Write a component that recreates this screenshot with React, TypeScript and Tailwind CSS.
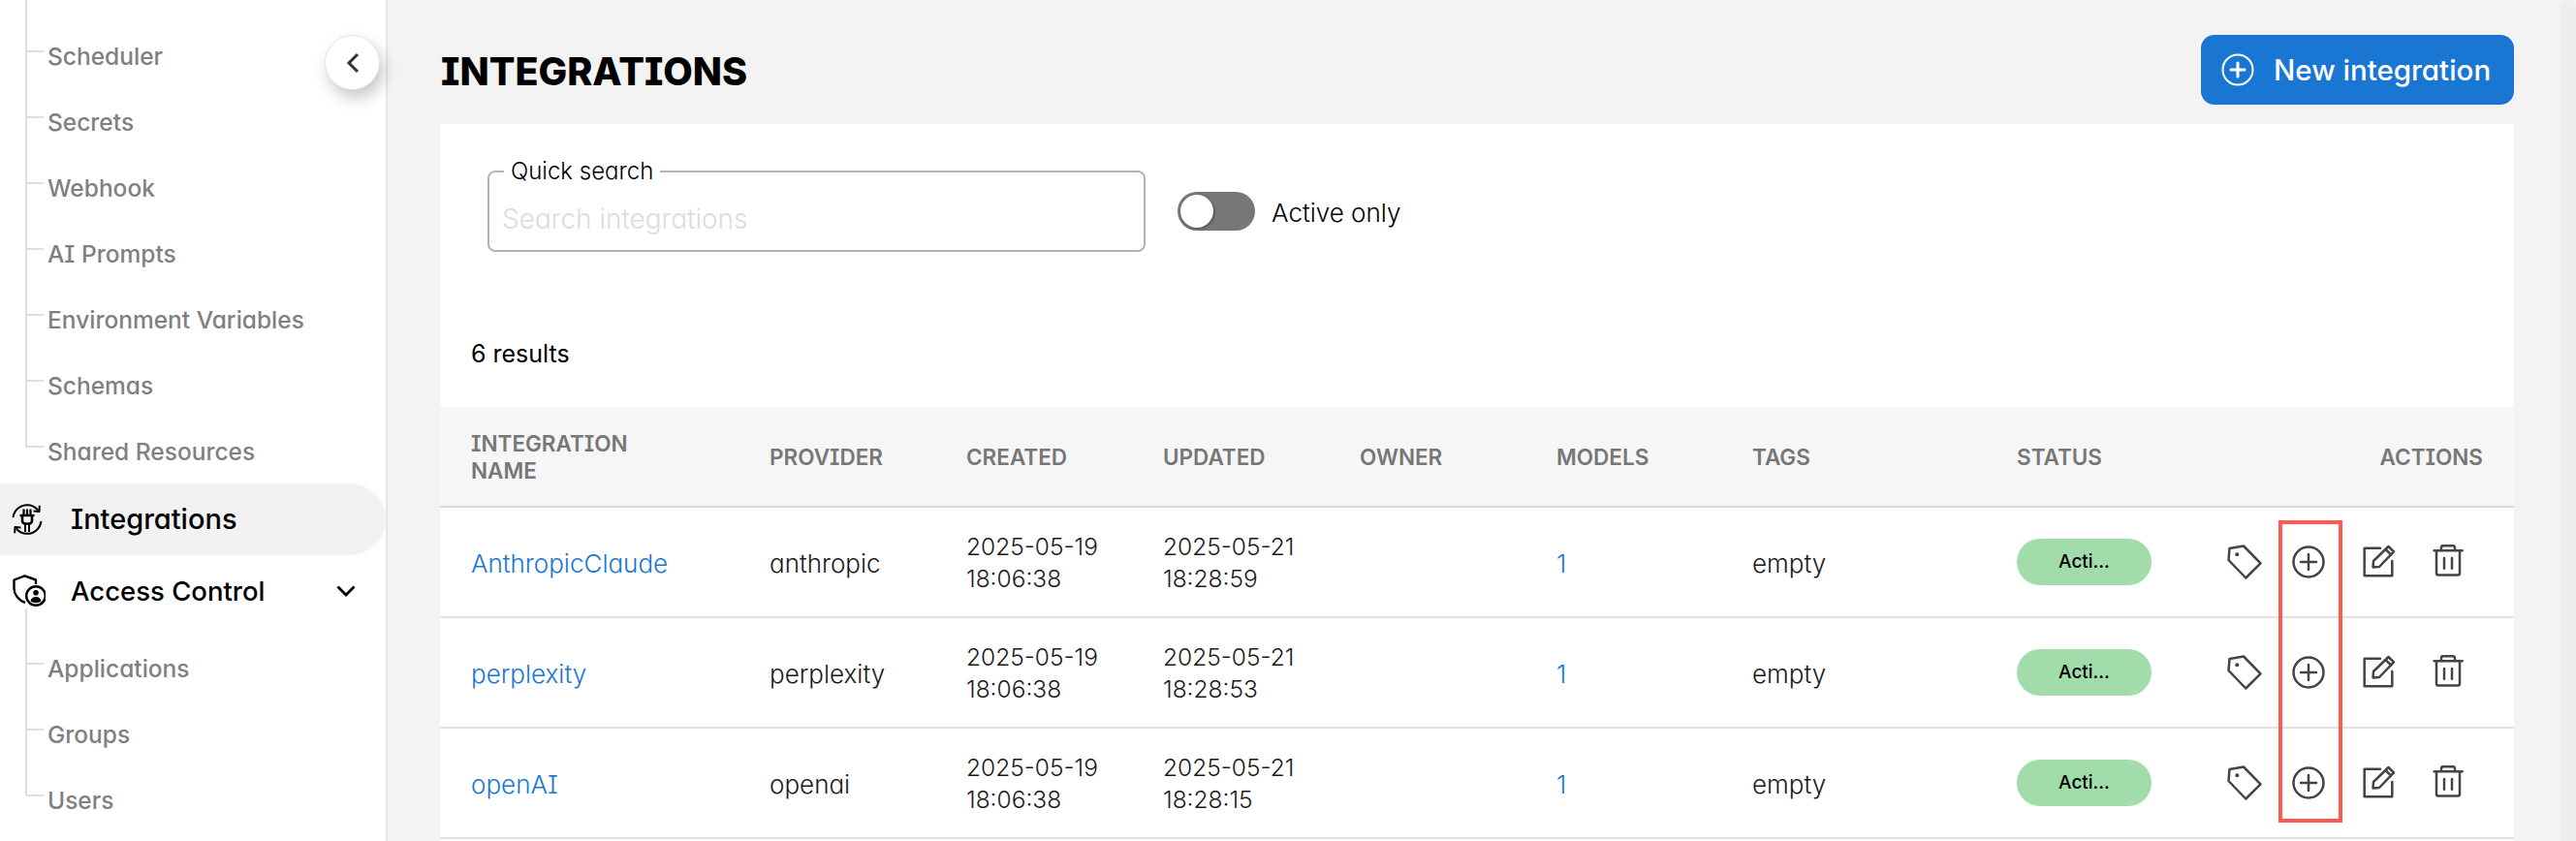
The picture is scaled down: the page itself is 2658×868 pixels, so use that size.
const subItemsTop = ['Scheduler', 'Secrets', 'Webhook', 'AI Prompts', 'Environment Variables', 'Schemas', 'Shared Resources'];
const subItemsAccess = ['Applications', 'Groups', 'Users'];

const rows = [
  { name: 'AnthropicClaude', provider: 'anthropic', updated: '18:28:59' },
  { name: 'perplexity', provider: 'perplexity', updated: '18:28:53' },
  { name: 'openAI', provider: 'openai', updated: '18:28:15' },
];

const columns = 'grid grid-cols-[340px_203px_203px_203px_203px_202px_273px_1fr] items-center';

function PlugSyncIcon() {
  return (
    <svg width="32" height="32" viewBox="0 0 32 32" fill="none" stroke="#000" strokeWidth="2" className="shrink-0">
      <path d="M1.5 14C2.6 6.6 8.6 1.2 16 1.2c4.6 0 8.700 2.200 11.300 5.500" />
      <path d="M28.800 1.800 28.500 8 22.500 7.400" strokeLinejoin="round" />
      <path d="M30.500 18C29.400 25.400 23.400 30.800 16 30.800c-4.600 0-8.700-2.200-11.300-5.500" />
      <path d="M3.200 30.200 3.500 24 9.500 24.600" strokeLinejoin="round" />
      <path d="M12.500 5.500V11M16 5.500V11M19.500 5.500V11" strokeWidth="2.200" />
      <path d="M8.500 12H23.500" strokeWidth="2.400" />
      <path d="M11 12.500V17.500A3 3 0 0 0 14 20.500H18A3 3 0 0 0 21 17.500V12.500" strokeWidth="2.600" />
      <path d="M14 20.500V29M18 20.500V29" strokeWidth="2" />
    </svg>
  );
}

function ShieldUserIcon() {
  return (
    <svg width="34" height="34" viewBox="0 0 34 34" fill="none" stroke="#000" strokeWidth="2.400" className="shrink-0">
      <path d="M24 10V5.500L12.500 1.300 1.500 5.500V14.500C1.500 20.500 6 26.500 13 29" strokeLinejoin="round" />
      <circle cx="24" cy="22" r="9.800" fill="#fff" />
      <circle cx="24" cy="18.700" r="2.800" fill="#000" stroke="none" />
      <path d="M18.500 27.500C19 24.500 21 23 24 23C27 23 29 24.500 29.500 27.500C28 28.700 26 29.200 24 29.200C22 29.200 20 28.700 18.500 27.500Z" fill="#000" stroke="none" />
    </svg>
  );
}

function PlusCircleIcon({ color, stroke = 2.500, arm = 8, plusStroke = 2.500 }: { color: string; stroke?: number; arm?: number; plusStroke?: number }) {
  return (
    <svg width="34" height="34" viewBox="0 0 34 34" fill="none" stroke={color} strokeWidth={stroke} strokeLinecap="round">
      <circle cx="17" cy="17" r="15.500" />
      <path d={`M${17 - arm} 17H${17 + arm}M17 ${17 - arm}V${17 + arm}`} strokeWidth={plusStroke} />
    </svg>
  );
}

function TagIcon() {
  return (
    <svg width="36" height="36" viewBox="0 0 36 36" fill="none" stroke="#444" strokeWidth="2.500" strokeLinejoin="round" className="ml-3">
      <path d="M2.500 4 17 1.500 34.500 19.300 19.300 34.500 1.500 16Z" />
      <circle cx="10.300" cy="10.300" r="2" fill="#444" stroke="none" />
    </svg>
  );
}

function EditIcon() {
  return (
    <svg width="36" height="36" viewBox="0 0 36 36" fill="none" stroke="#444" strokeWidth="2.500" strokeLinejoin="round" strokeLinecap="round">
      <path d="M20 3.700H3.700V32.300H32.300V17" />
      <path d="M12.500 23.500 13 17 28.500 2 34 7.300 19 23Z" />
      <path d="M25.500 5 31 10.300" />
    </svg>
  );
}

function TrashIcon() {
  return (
    <svg width="36" height="36" viewBox="0 0 36 36" fill="none" stroke="#444" strokeWidth="2.500" strokeLinecap="round" strokeLinejoin="round">
      <path d="M3.700 6.300H32.700" />
      <path d="M11 6V3.200A2 2 0 0 1 13 1.200H23A2 2 0 0 1 25 3.200V6" />
      <path d="M6 7V29.500A2 2 0 0 0 8 31.500H28A2 2 0 0 0 30 29.500V7" />
      <path d="M14 14V24.700M22 14V24.700" />
    </svg>
  );
}

function SubItem({ label }: { label: string }) {
  return (
    <div className="flex h-[68px] items-center pl-[28px]">
      <span className="mb-[8px] h-[2px] w-[17px] bg-[#dedede]" />
      <span className="ml-[4px] pt-[2px] text-[24.500px] font-medium text-[#808080]">{label}</span>
    </div>
  );
}

function Sidebar() {
  return (
    <aside className="relative h-full w-[400px] shrink-0 border-r-2 border-[#e6e6e6] bg-white">
      <div className="relative pt-[23px]">
        <span className="absolute bottom-[37px] left-[26px] top-0 w-[2px] bg-[#dedede]" />
        {subItemsTop.map((item) => (
          <SubItem key={item} label={item} />
        ))}
      </div>
      <div className="flex h-[74px] items-center rounded-r-full bg-[#f2f2f2] pl-[12px]">
        <PlugSyncIcon />
        <span className="ml-[29px] text-[29px] font-medium text-black">Integrations</span>
      </div>
      <div className="flex h-[74px] items-center pl-[13px] pr-[31px]">
        <ShieldUserIcon />
        <span className="ml-[26px] flex-1 pt-[1px] text-[27.500px] font-medium text-black">Access Control</span>
        <svg width="20" height="12" viewBox="0 0 20 12" fill="none" stroke="#000" strokeWidth="2.800">
          <path d="M1.500 1.500 10 10 18.500 1.500" />
        </svg>
      </div>
      <div className="relative pt-[8px]">
        <span className="absolute -top-[19px] bottom-[38px] left-[26px] w-[2px] bg-[#dedede]" />
        {subItemsAccess.map((item) => (
          <SubItem key={item} label={item} />
        ))}
      </div>
      <button className="absolute left-[335px] top-[36px] flex h-[57px] w-[57px] items-center justify-center rounded-full border border-[#e4e4e4] bg-white shadow-[4px_8px_16px_rgba(0,0,0,0.22)]">
        <svg width="14" height="22" viewBox="0 0 14 22" fill="none" stroke="#333" strokeWidth="3">
          <path d="M12 2 3 11 12 20" />
        </svg>
      </button>
    </aside>
  );
}

function Toolbar() {
  return (
    <div className="flex items-center pl-[49px] pt-[34px]">
      <fieldset className="h-[98px] w-[679px] rounded-[8px] border-2 border-[#b4b4b4] pl-[13px]">
        <legend className="ml-[2px] px-[7px] text-[24px] font-light leading-[30px] text-black">Quick search</legend>
        <div className="pt-[17px] text-[28px] font-light leading-[34px] text-[#dcdcdc]">Search integrations</div>
      </fieldset>
      <div className="ml-[33px] mt-[14px] flex h-[40px] w-[80px] items-center rounded-full bg-[#777] pl-[3px]">
        <span className="h-[34px] w-[34px] rounded-full bg-white shadow-[1px_1px_3px_rgba(0,0,0,0.4)]" />
      </div>
      <span className="ml-[17px] mt-[17px] text-[26px] font-light text-black">Active only</span>
    </div>
  );
}

function IntegrationRow({ name, provider, updated }: { name: string; provider: string; updated: string }) {
  return (
    <div className={`${columns} h-[114px] border-b-2 border-[#e2e2e2] text-[26px] font-light text-[#1a1a1a]`}>
      <a className="pl-[32px] pt-[3px] text-[#1976d2]">{name}</a>
      <div className="pt-[3px]">{provider}</div>
      <div className="pt-[1px] text-[24.500px] leading-[33px]">
        2025-05-19
        <br />
        18:06:38
      </div>
      <div className="pt-[1px] text-[24.500px] leading-[33px]">
        2025-05-21
        <br />
        {updated}
      </div>
      <div />
      <a className="pt-[3px] text-[#1976d2]">1</a>
      <div className="pt-[3px]">empty</div>
      <div className="flex items-center justify-between pr-[32px]">
        <span className="flex h-[48px] w-[139px] items-center justify-center rounded-full bg-[#a1dcaa] text-[19px] font-medium text-black">
          Acti…
        </span>
        <div className="flex">
          <button className="flex h-[72px] w-[72px] items-center justify-center"><TagIcon /></button>
          <button className="flex h-[72px] w-[72px] items-center justify-center"><PlusCircleIcon color="#444" /></button>
          <button className="flex h-[72px] w-[72px] items-center justify-center"><EditIcon /></button>
          <button className="flex h-[72px] w-[72px] items-center justify-center"><TrashIcon /></button>
        </div>
      </div>
    </div>
  );
}

function IntegrationsTable() {
  return (
    <div className="mt-[39px]">
      <div className={`${columns} h-[104px] border-b-2 border-[#d9d9d9] bg-[#f6f6f6] pt-[2px] text-[22.500px] font-semibold leading-[28px] text-[#777]`}>
        <div className="pl-[32px]">
          INTEGRATION
          <br />
          NAME
        </div>
        <div>PROVIDER</div>
        <div>CREATED</div>
        <div>UPDATED</div>
        <div>OWNER</div>
        <div>MODELS</div>
        <div>TAGS</div>
        <div className="flex justify-between pr-[32px]">
          <span>STATUS</span>
          <span>ACTIONS</span>
        </div>
      </div>
      <div className="relative">
        {rows.map((row) => (
          <IntegrationRow key={row.name} {...row} />
        ))}
        <span className="absolute left-[1897px] top-[13px] h-[312px] w-[66px] border-4 border-[#ff5a4f]" />
      </div>
    </div>
  );
}

export default function App() {
  return (
    <div className="flex h-[868px] w-[2658px] overflow-hidden bg-[#f3f3f3] font-[Inter,sans-serif] [font-feature-settings:'cv08','cv11']">
      <Sidebar />
      <main className="flex h-full min-w-0 flex-1 flex-col pl-[54px] pr-[48px]">
        <header className="flex h-[128px] shrink-0 items-start justify-between pt-[36px]">
          <h1 className="ml-[1px] mt-[9px] text-[39.500px] font-extrabold leading-[58px] text-black">INTEGRATIONS</h1>
          <button className="flex h-[72px] w-[323px] items-center rounded-[14px] bg-[#1976d2] pl-[21px] text-[29.500px] font-medium text-white">
            <PlusCircleIcon color="#fff" stroke={2} arm={7} plusStroke={3} />
            <span className="ml-[20px]">New integration</span>
          </button>
        </header>
        <section className="min-h-0 flex-1 overflow-hidden bg-white">
          <Toolbar />
          <div className="mt-[89px] pl-[32px] text-[25px] font-normal leading-[32px] text-black">6 results</div>
          <IntegrationsTable />
        </section>
      </main>
      <div className="h-full w-[16px] shrink-0 rounded-t-[8px] bg-[#eeeeee]" />
    </div>
  );
}
